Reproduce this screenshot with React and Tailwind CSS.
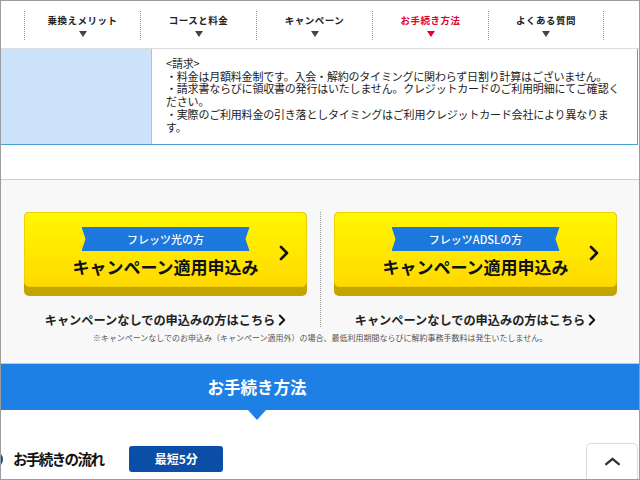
const navItems = [
  { label: '乗換えメリット' },
  { label: 'コースと料金' },
  { label: 'キャンペーン' },
  { label: 'お手続き方法', active: true },
  { label: 'よくある質問' },
];

function Chevron({ className = '' }) {
  return (
    <svg viewBox="0 0 10 16" className={className} fill="none">
      <polyline points="2,2 8,8 2,14" stroke="#111" strokeWidth="2.6" strokeLinecap="round" strokeLinejoin="round" />
    </svg>
  );
}

function CampaignCard({ label }) {
  return (
    <div className="w-[283px] flex flex-col items-center">
      {/* Yellow button with darker base */}
      <div className="w-full h-[84px] rounded-[5px] bg-[#c4a400]">
        <div className="relative h-[75px] rounded-[5px] bg-gradient-to-b from-[#fff800] to-[#ffd900] border border-[#f1d200] flex flex-col items-center">
          <div className="mt-[14px] w-[168px] h-[24px] bg-[#1c78dc] text-white text-[11px] font-medium flex items-center justify-center [clip-path:polygon(0_0,100%_0,calc(100%-4px)_50%,100%_100%,0_100%,4px_50%)]">
            {label}
          </div>
          <div className="mt-[5px] leading-[22px] text-[17px] font-bold text-[#111]">キャンペーン適用申込み</div>
          <Chevron className="absolute right-[17px] top-[32px] w-[10px] h-[16px]" />
        </div>
      </div>
      <div className="mt-[15px] leading-[18px] flex items-center gap-[3px] text-[12.2px] font-bold text-[#222]">
        キャンペーンなしでの申込みの方はこちら
        <Chevron className="w-[8px] h-[12px]" />
      </div>
    </div>
  );
}

export default function App() {
  return (
    <div className="relative w-[640px] h-[480px] overflow-hidden border border-[#9c9c9c] bg-white text-[#333] font-['Noto_Sans_CJK_JP',sans-serif]">
      {/* Nav */}
      <nav className="h-[48px] border-b border-[#dcdcdc] flex items-start pt-[10px] pl-[23px]">
        {navItems.map((item, i) => (
          <div
            key={item.label}
            className={`w-[116px] h-[29px] border-l border-dotted border-[#9a9a9a] flex flex-col items-center pt-[3px] ${i === navItems.length - 1 ? 'border-r' : ''}`}
          >
            <span className={`text-[9.5px] leading-[12px] font-bold tracking-[0.5px] ${item.active ? 'text-[#e6002d]' : 'text-[#222]'}`}>
              {item.label}
            </span>
            <span
              className={`mt-[5px] w-0 h-0 border-l-[4px] border-r-[4px] border-t-[6px] border-l-transparent border-r-transparent ${item.active ? 'border-t-[#e6002d]' : 'border-t-[#444]'}`}
            />
          </div>
        ))}
      </nav>

      {/* Billing table row */}
      <div className="flex h-[96px] border-b border-[#4aa0d8] mr-[1px] border-r">
        <div className="w-[151px] bg-[#cde3fb] border-r border-[#9ac8ee]" />
        <div className="flex-1 pl-[14px] pt-[8px] text-[11px] leading-[12.7px] tracking-[-0.2px] text-[#222]">
          <div className="w-[458px]">
            <p>&lt;請求&gt;</p>
            <p>・料金は月額料金制です。入会・解約のタイミングに関わらず日割り計算はございません。</p>
            <p>・請求書ならびに領収書の発行はいたしません。クレジットカードのご利用明細にてご確認ください。</p>
            <p>・実際のご利用料金の引き落としタイミングはご利用クレジットカード会社により異なります。</p>
          </div>
        </div>
      </div>

      <div className="h-[34px]" />

      {/* Campaign section */}
      <section className="border-t border-[#cfcfcf] bg-[#f8f8f8] pt-[32px] pb-[19px]">
        <div className="flex pl-[23px]">
          <CampaignCard label="フレッツ光の方" />
          <div className="w-[13px]" />
          <div className="w-0 border-l border-dotted border-[#9a9a9a] self-stretch mb-[2px]" />
          <div className="w-[13px]" />
          <CampaignCard label="フレッツADSLの方" />
        </div>
        <p className="mt-[3px] text-center text-[8px] leading-[12px] text-[#555]">
          ※キャンペーンなしでのお申込み（キャンペーン適用外）の場合、最低利用期間ならびに解約事務手数料は発生いたしません。
        </p>
      </section>

      {/* Section title band */}
      <div className="border-t border-[#a9cdef] bg-[#1e80e4] h-[47px] flex items-center justify-center pr-[126px]">
        <div className="relative">
          <h2 className="text-white text-[16.5px] font-bold leading-[24px]">お手続き方法</h2>
          <span className="absolute left-1/2 -translate-x-1/2 top-[35px] w-0 h-0 border-l-[9px] border-r-[9px] border-t-[10px] border-l-transparent border-r-transparent border-t-[#1e80e4]" />
        </div>
      </div>

      {/* Flow heading */}
      <div className="mt-[36px] h-[26px] flex items-center">
        <span className="ml-[-15px] w-[17px] h-[17px] rounded-full bg-[#0a4ea5]" />
        <h3 className="ml-[10px] text-[14.5px] font-bold tracking-[-1.6px] text-[#111]">お手続きの流れ</h3>
        <span className="ml-[26px] w-[94px] h-[26px] rounded-[3px] bg-[#0b4ea8] text-white text-[12px] font-bold flex items-center justify-center">
          最短5分
        </span>
      </div>

      {/* Back to top */}
      <button className="absolute right-[1px] bottom-0 w-[52px] h-[36px] bg-white border border-b-0 border-[#dadada] rounded-t-[5px] flex items-center justify-center">
        <svg viewBox="0 0 18 10" className="w-[17px] h-[9px]" fill="none">
          <polyline points="2,8 9,2 16,8" stroke="#333" strokeWidth="2.6" strokeLinecap="round" strokeLinejoin="round" />
        </svg>
      </button>
    </div>
  );
}
